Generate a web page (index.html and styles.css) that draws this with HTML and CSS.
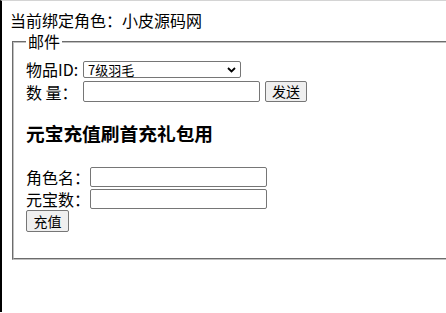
FILE: index.html
```html
<!DOCTYPE html>
<html lang="zh-CN">
<head>
<meta charset="utf-8">
<title>邮件</title>
<link rel="stylesheet" href="styles.css">
</head>
<body>
<div class="page">
  <p class="bound">当前绑定角色：小皮源码网</p>
  <fieldset class="mail">
    <legend class="mail-legend">邮件</legend>
    <div class="row row-a"><span class="lbl">物品ID:</span><span class="sel-wrap"><select class="sel"><option>7级羽毛</option></select><svg class="chev" width="9" height="6" viewBox="0 0 9 6"><path d="M1 1 L4.5 4.5 L8 1" fill="none" stroke="#000" stroke-width="1.8"/></svg></span></div>
    <div class="row row-b"><span class="lbl">数 量：</span><input class="txt" type="text"><button class="btn btn-send" type="button">发送</button></div>
    <h3 class="title">元宝充值刷首充礼包用</h3>
    <div class="row row-c"><span class="lbl lbl-wide">角色名：</span><input class="txt txt-sm" type="text"></div>
    <div class="row row-d"><span class="lbl lbl-wide">元宝数：</span><input class="txt txt-sm" type="text"></div>
    <div class="row row-e"><button class="btn btn-pay" type="button">充值</button></div>
  </fieldset>
</div>
</body>
</html>
```
FILE: styles.css
```css
html, body {
  margin: 0;
  padding: 0;
  background: #fff;
  overflow: hidden;
}
body {
  font-family: "Noto Sans CJK SC", "Noto Sans", "Liberation Sans", sans-serif;
  font-size: 16px;
  color: #000;
}
.page {
  border-top: 1px solid #d4d4d4;
  border-left: 2px solid #000;
  min-height: 312px;
  box-sizing: border-box;
  padding: 8px 0 0 8px;
  width: 640px;
}
.bound {
  margin: 0;
  height: 22px;
  line-height: 22px;
  white-space: nowrap;
}
.mail {
  margin: 0 2px;
  padding: 6px 12px 26px 12px;
  border: 2px groove #c0c0c0;
  width: 560px;
  min-width: 0;
}
.mail-legend {
  padding: 0 2px;
  line-height: 20px;
  height: 21px;
}
.row {
  display: flex;
  align-items: center;
  height: 22px;
}
.row-b { height: 23px; }
.row-c { height: 23px; }
.row-d { height: 22px; }
.lbl {
  width: 57px;
  flex: none;
  white-space: pre;
  line-height: 20px;
}
.lbl-wide { width: 64px; }
.sel-wrap {
  position: relative;
  display: inline-flex;
}
.sel {
  appearance: none;
  -webkit-appearance: none;
  width: 158px;
  height: 17px;
  box-sizing: border-box;
  font-family: "Noto Sans CJK SC", "Liberation Sans", sans-serif;
  font-size: 13px;
  line-height: 15px;
  padding: 0 0 0 4px;
  margin: 0;
  border: 1px solid #767676;
  border-radius: 2px;
  background: #fff;
  color: #000;
}
.chev {
  position: absolute;
  right: 5px;
  top: 6px;
  pointer-events: none;
}
.txt {
  width: 177px;
  height: 21px;
  box-sizing: border-box;
  border: 1px solid #767676;
  border-radius: 2px;
  padding: 1px 2px;
  margin: 0;
  font-size: 13px;
}
.txt-sm { height: 20px; }
.btn {
  height: 21px;
  box-sizing: border-box;
  font-family: "Noto Sans CJK SC", "Liberation Sans", sans-serif;
  font-size: 14px;
  line-height: 17px;
  padding: 0 6px;
  background: #efefef;
  border: 1px solid #767676;
  border-radius: 2px;
  color: #000;
}
.btn-send {
  margin-left: 5px;
  width: 42px;
}
.btn-pay {
  width: 43px;
  height: 22px;
}
.title {
  margin: 19px 0 21px 0;
  font-size: 18.72px;
  font-weight: bold;
  line-height: 22px;
  height: 22px;
}
```
